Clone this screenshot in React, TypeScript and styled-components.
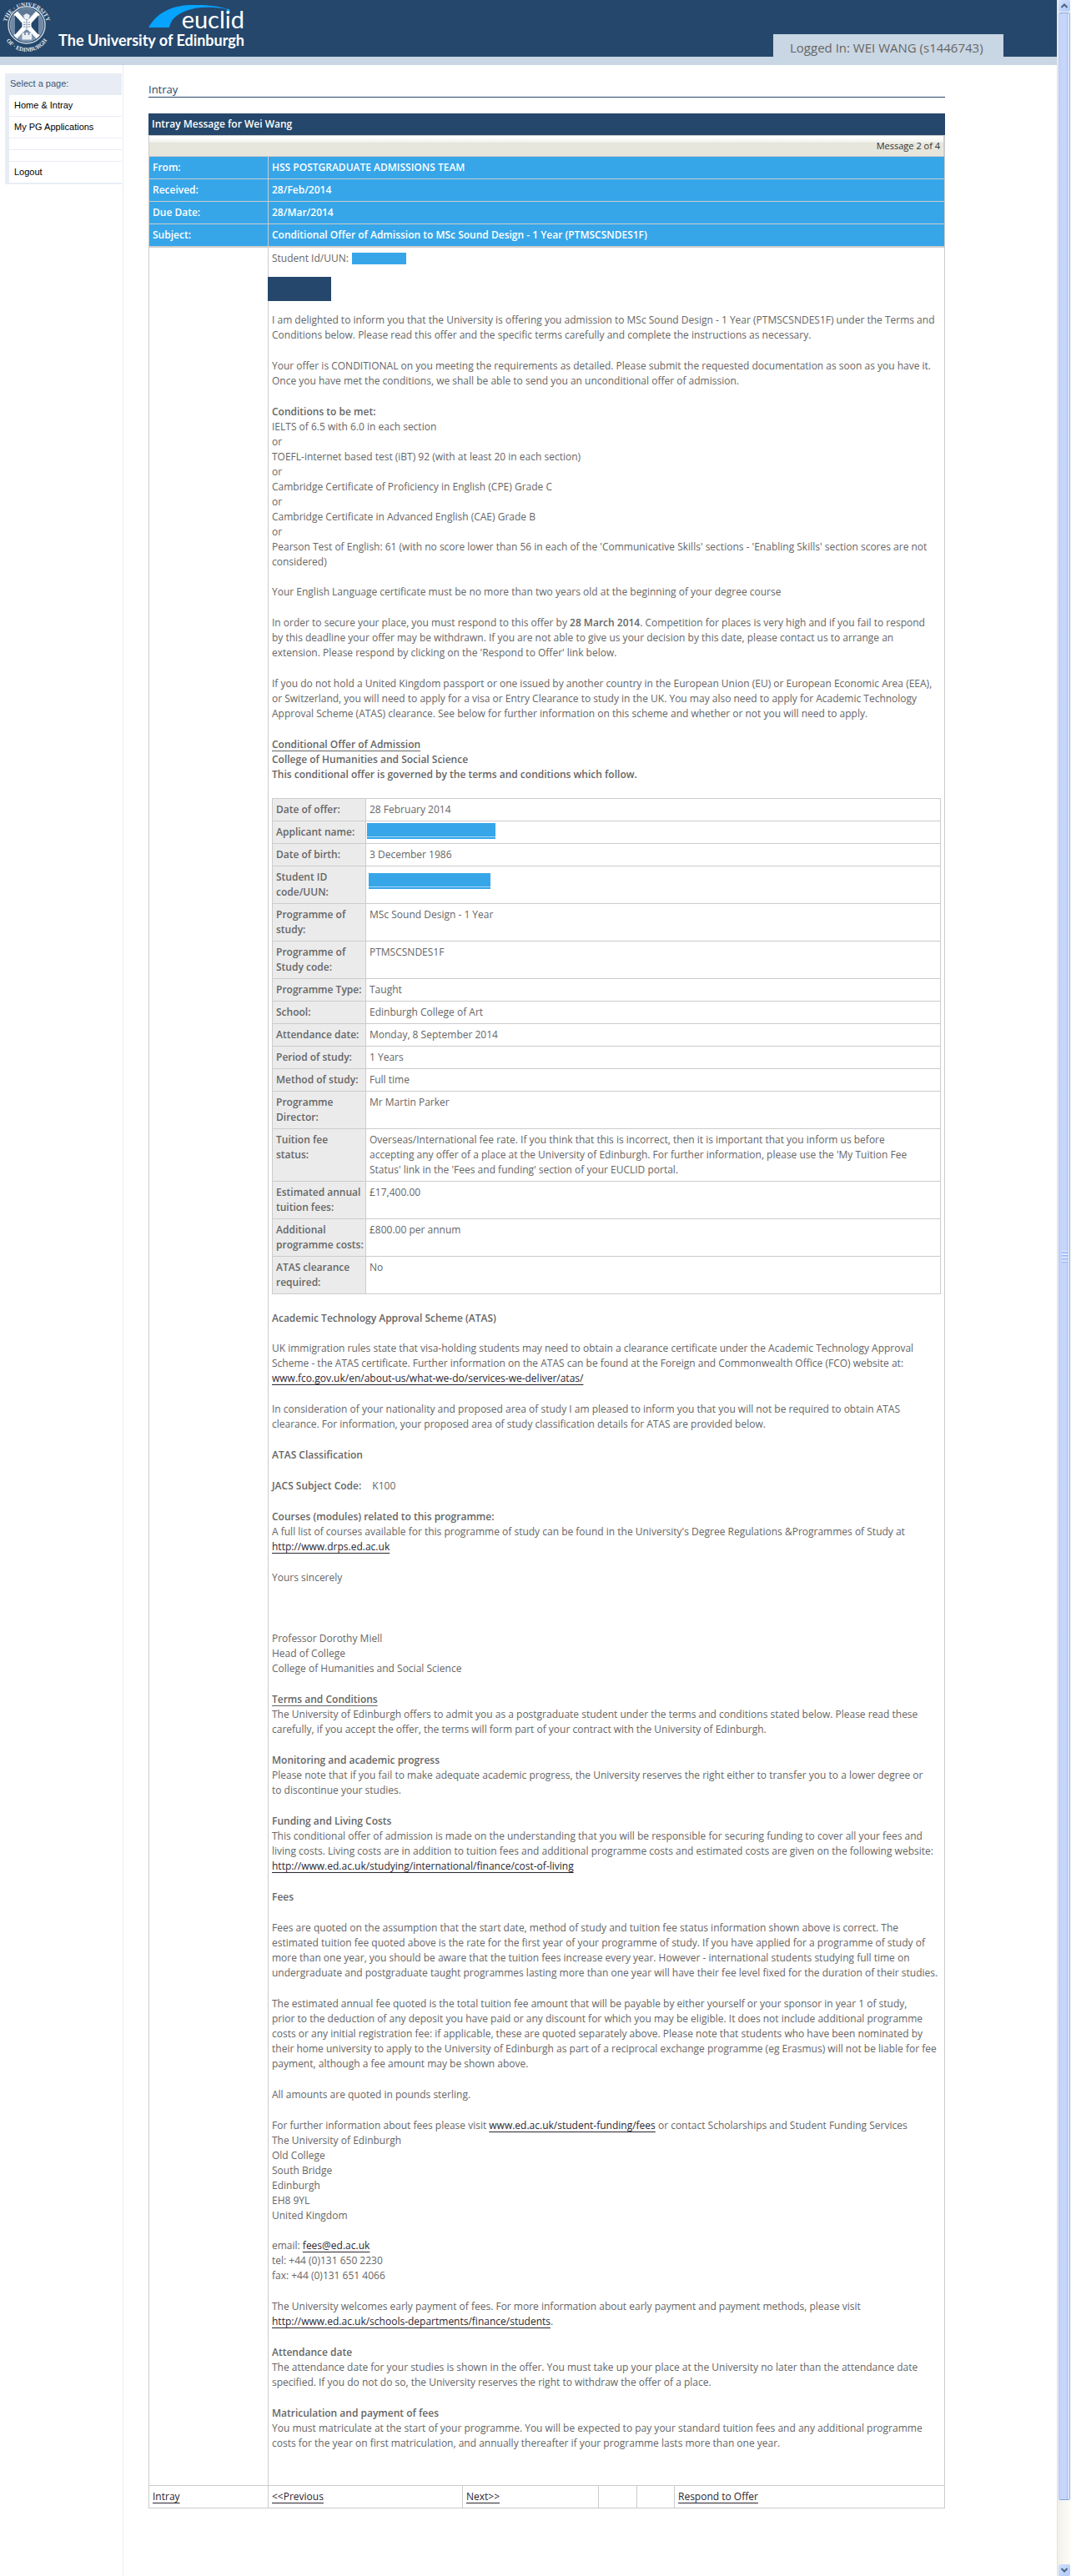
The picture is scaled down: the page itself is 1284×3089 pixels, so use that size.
import React from "react";
import styled, { createGlobalStyle } from "styled-components";

const navy = "#25476b";
const sky = "#36a6e9";
const pale = "#c9d6e3";
const line = "#cccccc";
const body = "#666666";
const bodyFont = '"Trebuchet MS", "Open Sans", sans-serif';
const menuFont = '"Liberation Sans", Arial, sans-serif';

const GlobalStyle = createGlobalStyle`
  * { box-sizing: border-box; }
  body { margin: 0; background: #fff; color: ${body}; font: 12px/18px ${bodyFont}; }
`;

const Shell = styled.div`
  display: flex;
  align-items: stretch;
`;
const Page = styled.div`
  flex: 1;
  min-width: 0;
  display: flex;
  flex-direction: column;
`;

const Header = styled.header`
  display: flex;
  justify-content: space-between;
  height: 78px;
  background: ${navy};
  border-bottom: 10px solid ${pale};
`;
const Brand = styled.div`
  display: flex;
`;
const Wordmarks = styled.div`
  display: flex;
  flex-direction: column;
  align-items: flex-end;
  width: 231px;
  color: #fff;
`;
const Euclid = styled.div`
  display: flex;
  align-items: flex-start;
  height: 37px;
`;
const EuclidName = styled.span`
  margin-left: -59px;
  padding-top: 9px;
  font: 400 29px/28px Lato, sans-serif;
`;
const University = styled.span`
  font: 700 18px/22px Lato, sans-serif;
  white-space: nowrap;
`;
const LoginTab = styled.div`
  align-self: flex-end;
  min-width: 276px;
  height: 27px;
  margin-right: 64px;
  padding: 4px 20px 0;
  background: ${pale};
  color: ${body};
  font-size: 15px;
  line-height: 24px;
`;

const Columns = styled.div`
  flex: 1;
  display: flex;
`;
const Side = styled.aside`
  flex: 0 0 148px;
  padding: 10px 1px 0 6px;
  border-right: 1px solid #e9edf3;
  font-family: ${menuFont};
  font-size: 11px;
`;
const Menu = styled.nav`
  background: #e8edf5;
  padding: 0 0 2px 5px;
`;
const MenuTitle = styled.div`
  height: 26px;
  padding-left: 1px;
  line-height: 25px;
  color: #3a5677;
`;
const MenuList = styled.ul`
  display: flex;
  flex-direction: column;
  gap: 1px;
  margin: 0;
  padding: 0;
  list-style: none;
`;
const MenuItem = styled.li<{ $blank?: boolean }>`
  height: ${(p) => (p.$blank ? 13 : 25)}px;
  padding-left: 6px;
  background: #fff;
  line-height: 25px;
`;
const MenuLink = styled.a`
  color: #000;
  text-decoration: none;
`;

const Main = styled.main`
  flex: 1;
  min-width: 0;
  padding: 20px 134px 81px 30px;
`;
const PageTitle = styled.h1`
  margin: 0 0 19px;
  border-bottom: 1px solid ${navy};
  color: ${navy};
  font-size: 13px;
  font-weight: 400;
  line-height: 18px;
`;
const MessageTitle = styled.h2`
  margin: 0;
  padding: 0 4px;
  background: ${navy};
  color: #fff;
  font-size: 12px;
  font-weight: 600;
  line-height: 26px;
`;
const Counter = styled.div`
  height: 25px;
  margin: 0;
  padding: 3px 4px 0;
  border: 1px solid ${line};
  border-width: 1px 2px 0 1px;
  background: linear-gradient(#fff 2px, #efefea 8px, #e6e6dd 8px);
  color: #333;
  font-size: 11px;
  text-align: right;
`;
const Message = styled.table`
  width: 100%;
  table-layout: fixed;
  border-spacing: 0;
  border-top: 1px solid ${line};
  border-left: 1px solid ${line};
`;
const LabelCol = styled.col`
  width: ${(p: { width?: number }) => p.width}px;
`;
const MetaRow = styled.tr`
  background: ${sky};
  color: #fff;
  font-weight: 600;
  &:last-child > * { border-bottom-width: 2px; }
`;
const metaCell = `
  padding: 4px;
  border-right: 1px solid ${line};
  border-bottom: 1px solid ${line};
  text-align: left;
  font-weight: 600;
`;
const MetaLabel = styled.th`${metaCell}`;
const MetaValue = styled.td`${metaCell}`;
const EmptyCell = styled.td`
  padding: 0;
  border-right: 1px solid ${line};
`;
const LetterCell = styled.td`
  padding: 4px 4px 41px;
  border-right: 1px solid ${line};
  vertical-align: top;
`;

const StudentLine = styled.p`
  display: flex;
  align-items: center;
  gap: 4px;
  margin: 0 0 13px;
`;
const Mask = styled.span<{ $w: number; $h: number }>`
  display: block;
  width: ${(p) => p.$w}px;
  height: ${(p) => p.$h}px;
  background: ${sky};
`;
const NameMask = styled.div`
  width: 76px;
  height: 29px;
  margin: 0 0 14px -5px;
  background: ${navy};
`;
const FieldMask = styled(Mask)<{ $inset: string }>`
  margin: ${(p) => p.$inset};
  border-bottom: 2px solid ${sky};
  background: linear-gradient(${sky} 16px, #a9d8f6 16px);
`;
const P = styled.p<{ $gap?: number }>`
  margin: 0 0 ${(p) => p.$gap ?? 19}px;
`;
const B = styled.strong`
  font-weight: 600;
`;
const U = styled(B)`
  text-decoration: underline;
  text-underline-offset: 3px;
`;
const Link = styled.a`
  color: #2b2630;
  text-decoration: underline;
  text-underline-offset: 3px;
`;
const Code = styled.span`
  margin-left: 10px;
`;

const Offer = styled.table`
  width: 100%;
  margin: 0 0 20px;
  table-layout: fixed;
  border-spacing: 0;
  border-top: 1px solid ${line};
  border-left: 1px solid ${line};
`;
const offerCell = `
  padding: 4px;
  border-right: 1px solid ${line};
  border-bottom: 1px solid ${line};
  vertical-align: top;
  text-align: left;
`;
const OfferLabel = styled.th`
  ${offerCell}
  padding-right: 0;
  background: #ebebeb;
  font-weight: 600;
  white-space: nowrap;
`;
const OfferValue = styled.td`${offerCell}`;

const Actions = styled.nav`
  display: grid;
  grid-template-columns: 143px 233px 163px 46px 45px 1fr;
  border: 1px solid ${line};
  border-right-width: 0;
`;
const Action = styled.div`
  height: 26px;
  padding: 4px;
  border-right: 1px solid ${line};
`;

const Scroll = styled.div`
  flex: 0 0 17px;
  display: flex;
  flex-direction: column;
  padding: 0 1px;
  border-left: 1px solid #e6e2da;
  background: linear-gradient(90deg, #f2f0e8, #fdfdfa);
`;
const ScrollButton = styled.button`
  height: 14px;
  padding: 0;
  border: 0;
  border-radius: 2px;
  background: linear-gradient(135deg, #d3dffd, #aecaf8);
  line-height: 0;
`;
const Thumb = styled.div`
  flex: 1;
  display: flex;
  flex-direction: column;
  align-items: center;
  justify-content: center;
  gap: 2px;
  margin: 1px 0 77px;
  border: 1px solid #86a5dc;
  border-left-color: #b5c9f5;
  border-radius: 2px;
  background: linear-gradient(90deg, #c3d3fb, #c8d6fb 60%, #b2c7f8 90%, #fff 90%);
`;
const Grip = styled.span`
  width: 7px;
  height: 2px;
  border-top: 1px solid #eef4fe;
  background: #8cb0f8;
`;

const Crest = () => (
  <svg width="62" height="62" viewBox="0 0 62 62" role="img" aria-label="University crest">
    <defs>
      <path id="ringTop" d="M7.500 32 A24.500 24.500 0 0 1 56.500 32" />
      <path id="ringBottom" d="M3 33 A29 29 0 0 0 61 33" />
    </defs>
    <g fill="#e3eaf1" fontFamily="Liberation Serif, serif" fontSize="7" fontWeight="700" textAnchor="middle">
      <text>
        <textPath href="#ringTop" startOffset="50%">THE · UNIVERSITY</textPath>
      </text>
      <text>
        <textPath href="#ringBottom" startOffset="50%">OF · EDINBURGH</textPath>
      </text>
    </g>
    <g transform="translate(.5 .5)">
      <circle cx="31.500" cy="29.500" r="22" fill="#25476b" stroke="#c9d5e1" strokeWidth="1.400" />
      <circle cx="31.500" cy="29.500" r="19.800" fill="#6f88a3" stroke="#93a7bc" strokeWidth="1" />
      <path d="M18 15 L45 44 M45 15 L18 44" stroke="#fff" strokeWidth="6" />
      <path d="M17.500 18 L28 29.500 L17.500 41 Z M45.500 18 L35 29.500 L45.500 41 Z" fill="#25476b" />
      <path d="M21 12.500 Q31.500 8 42 12.500 L31.500 24 Z" fill="#5d7894" />
      <path d="M31.500 15.500 l4 2.500 -2 5 h-4 l-2 -5 z" fill="#e9eef4" />
      <path d="M20 45.500 Q31.500 51 43 45.500 L36 38 H27 Z" fill="#7f96ae" />
      <path d="M26 39 h2.500 v2.500 h2 v-3 h2.500 v3 h2 v-2.500 h2.500 v8 h-11.500 z" fill="#e9eef4" />
      <path d="M26 24 q3 -1.500 5.500 0 q2.500 -1.500 5.500 0 v11 q-3 -1 -5.500 .5 q-2.500 -1.500 -5.500 -.5 z" fill="#fff" />
      <path d="M31.500 24 v11 M27.500 26.500 h2.500 M27.500 29 h2.500 M27.500 31.500 h2.500 M33 26.500 h2.500 M33 29 h2.500 M33 31.500 h2.500" stroke="#54708e" strokeWidth=".8" />
    </g>
  </svg>
);

const Swoosh = () => (
  <svg width="99" height="34" viewBox="0 0 99 34" aria-hidden="true">
    <path d="M0 33 C12 12 33 5 58 6 C75 6 88 8 98 12 C76 7 58 8 45 13 C32 18 27 24 25 33 Z" fill="#06a3ff" />
    <circle cx="95.500" cy="12.500" r="2" fill="#06a3ff" />
  </svg>
);

const Chevron = ({ up }: { up?: boolean }) => (
  <svg width="10" height="8" viewBox="0 0 10 8" aria-hidden="true">
    <path d={up ? "M1.500 6 L5 2.500 L8.500 6" : "M1.500 2 L5 5.500 L8.500 2"} fill="none" stroke="#4d6185" strokeWidth="2" />
  </svg>
);

const meta: [string, string][] = [
  ["From:", "HSS POSTGRADUATE ADMISSIONS TEAM"],
  ["Received:", "28/Feb/2014"],
  ["Due Date:", "28/Mar/2014"],
  ["Subject:", "Conditional Offer of Admission to MSc Sound Design - 1 Year (PTMSCSNDES1F)"],
];

/** Stacks strings and nodes one per line. */
const Lines = ({ of }: { of: React.ReactNode[] }) => (
  <>
    {of.map((item, i) => (
      <React.Fragment key={i}>
        {i > 0 && <br />}
        {item}
      </React.Fragment>
    ))}
  </>
);

const offer: [string[], React.ReactNode][] = [
  [["Date of offer:"], "28 February 2014"],
  [["Applicant name:"], <FieldMask $w={154} $h={19} $inset="-2px 0 1px -3px" />],
  [["Date of birth:"], "3 December 1986"],
  [["Student ID", "code/UUN:"], <FieldMask $w={146} $h={19} $inset="4px 0 0 -1px" />],
  [["Programme of", "study:"], "MSc Sound Design - 1 Year"],
  [["Programme of", "Study code:"], "PTMSCSNDES1F"],
  [["Programme Type:"], "Taught"],
  [["School:"], "Edinburgh College of Art"],
  [["Attendance date:"], "Monday, 8 September 2014"],
  [["Period of study:"], "1 Years"],
  [["Method of study:"], "Full time"],
  [["Programme", "Director:"], "Mr Martin Parker"],
  [
    ["Tuition fee", "status:"],
    <Lines
      of={[
        "Overseas/International fee rate. If you think that this is incorrect, then it is important that you inform us before",
        "accepting any offer of a place at the University of Edinburgh. For further information, please use the 'My Tuition Fee",
        "Status' link in the 'Fees and funding' section of your EUCLID portal.",
      ]}
    />,
  ],
  [["Estimated annual", "tuition fees:"], "£17,400.00"],
  [["Additional", "programme costs:"], "£800.00 per annum"],
  [["ATAS clearance", "required:"], "No"],
];

const Letter = () => (
  <>
    <StudentLine>
      Student Id/UUN: <Mask $w={65} $h={14} />
    </StudentLine>
    <NameMask />
    <P>
      <Lines
        of={[
          "I am delighted to inform you that the University is offering you admission to MSc Sound Design - 1 Year (PTMSCSNDES1F) under the Terms and",
          "Conditions below. Please read this offer and the specific terms carefully and complete the instructions as necessary.",
        ]}
      />
    </P>
    <P>
      <Lines
        of={[
          "Your offer is CONDITIONAL on you meeting the requirements as detailed. Please submit the requested documentation as soon as you have it.",
          "Once you have met the conditions, we shall be able to send you an unconditional offer of admission.",
        ]}
      />
    </P>
    <P $gap={18}>
      <Lines
        of={[
          <B>Conditions to be met:</B>,
          "IELTS of 6.5 with 6.0 in each section",
          "or",
          "TOEFL-internet based test (iBT) 92 (with at least 20 in each section)",
          "or",
          "Cambridge Certificate of Proficiency in English (CPE) Grade C",
          "or",
          "Cambridge Certificate in Advanced English (CAE) Grade B",
          "or",
          "Pearson Test of English: 61 (with no score lower than 56 in each of the 'Communicative Skills' sections - 'Enabling Skills' section scores are not",
          "considered)",
        ]}
      />
    </P>
    <P>Your English Language certificate must be no more than two years old at the beginning of your degree course</P>
    <P>
      <Lines
        of={[
          <>
            In order to secure your place, you must respond to this offer by <B>28 March 2014</B>. Competition for places is very high and if you fail to respond
          </>,
          "by this deadline your offer may be withdrawn. If you are not able to give us your decision by this date, please contact us to arrange an",
          "extension. Please respond by clicking on the 'Respond to Offer' link below.",
        ]}
      />
    </P>
    <P>
      <Lines
        of={[
          "If you do not hold a United Kingdom passport or one issued by another country in the European Union (EU) or European Economic Area (EEA),",
          "or Switzerland, you will need to apply for a visa or Entry Clearance to study in the UK. You may also need to apply for Academic Technology",
          "Approval Scheme (ATAS) clearance. See below for further information on this scheme and whether or not you will need to apply.",
        ]}
      />
    </P>
    <P>
      <Lines
        of={[
          <U>Conditional Offer of Admission</U>,
          <B>College of Humanities and Social Science</B>,
          <B>This conditional offer is governed by the terms and conditions which follow.</B>,
        ]}
      />
    </P>
    <Offer>
      <colgroup>
        <LabelCol width={112} />
        <col />
      </colgroup>
      <tbody>
        {offer.map(([label, value]) => (
          <tr key={label.join(" ")}>
            <OfferLabel scope="row">
              <Lines of={label} />
            </OfferLabel>
            <OfferValue>{value}</OfferValue>
          </tr>
        ))}
      </tbody>
    </Offer>
    <P $gap={18}>
      <B>Academic Technology Approval Scheme (ATAS)</B>
    </P>
    <P>
      <Lines
        of={[
          "UK immigration rules state that visa-holding students may need to obtain a clearance certificate under the Academic Technology Approval",
          "Scheme - the ATAS certificate. Further information on the ATAS can be found at the Foreign and Commonwealth Office (FCO) website at:",
          <Link href="#atas">www.fco.gov.uk/en/about-us/what-we-do/services-we-deliver/atas/</Link>,
        ]}
      />
    </P>
    <P>
      <Lines
        of={[
          "In consideration of your nationality and proposed area of study I am pleased to inform you that you will not be required to obtain ATAS",
          "clearance. For information, your proposed area of study classification details for ATAS are provided below.",
        ]}
      />
    </P>
    <P>
      <B>ATAS Classification</B>
    </P>
    <P>
      <B>JACS Subject Code:</B> <Code>K100</Code>
    </P>
    <P>
      <Lines
        of={[
          <B>Courses (modules) related to this programme:</B>,
          "A full list of courses available for this programme of study can be found in the University's Degree Regulations &Programmes of Study at",
          <Link href="#drps">http://www.drps.ed.ac.uk</Link>,
        ]}
      />
    </P>
    <P $gap={55}>Yours sincerely</P>
    <P>
      <Lines of={["Professor Dorothy Miell", "Head of College", "College of Humanities and Social Science"]} />
    </P>
    <P>
      <Lines
        of={[
          <U>Terms and Conditions</U>,
          "The University of Edinburgh offers to admit you as a postgraduate student under the terms and conditions stated below. Please read these",
          "carefully, if you accept the offer, the terms will form part of your contract with the University of Edinburgh.",
        ]}
      />
    </P>
    <P>
      <Lines
        of={[
          <B>Monitoring and academic progress</B>,
          "Please note that if you fail to make adequate academic progress, the University reserves the right either to transfer you to a lower degree or",
          "to discontinue your studies.",
        ]}
      />
    </P>
    <P>
      <Lines
        of={[
          <B>Funding and Living Costs</B>,
          "This conditional offer of admission is made on the understanding that you will be responsible for securing funding to cover all your fees and",
          "living costs. Living costs are in addition to tuition fees and additional programme costs and estimated costs are given on the following website:",
          <Link href="#living">http://www.ed.ac.uk/studying/international/finance/cost-of-living</Link>,
        ]}
      />
    </P>
    <P>
      <B>Fees</B>
    </P>
    <P>
      <Lines
        of={[
          "Fees are quoted on the assumption that the start date, method of study and tuition fee status information shown above is correct. The",
          "estimated tuition fee quoted above is the rate for the first year of your programme of study. If you have applied for a programme of study of",
          "more than one year, you should be aware that the tuition fees increase every year. However - international students studying full time on",
          "undergraduate and postgraduate taught programmes lasting more than one year will have their fee level fixed for the duration of their studies.",
        ]}
      />
    </P>
    <P>
      <Lines
        of={[
          "The estimated annual fee quoted is the total tuition fee amount that will be payable by either yourself or your sponsor in year 1 of study,",
          "prior to the deduction of any deposit you have paid or any discount for which you may be eligible. It does not include additional programme",
          "costs or any initial registration fee: if applicable, these are quoted separately above. Please note that students who have been nominated by",
          "their home university to apply to the University of Edinburgh as part of a reciprocal exchange programme (eg Erasmus) will not be liable for fee",
          "payment, although a fee amount may be shown above.",
        ]}
      />
    </P>
    <P>All amounts are quoted in pounds sterling.</P>
    <P $gap={18}>
      <Lines
        of={[
          <>
            For further information about fees please visit <Link href="#fees">www.ed.ac.uk/student-funding/fees</Link> or contact Scholarships and Student Funding Services
          </>,
          "The University of Edinburgh",
          "Old College",
          "South Bridge",
          "Edinburgh",
          "EH8 9YL",
          "United Kingdom",
        ]}
      />
    </P>
    <P>
      <Lines
        of={[
          <>
            email: <Link href="#email">fees@ed.ac.uk</Link>
          </>,
          "tel: +44 (0)131 650 2230",
          "fax: +44 (0)131 651 4066",
        ]}
      />
    </P>
    <P>
      <Lines
        of={[
          "The University welcomes early payment of fees. For more information about early payment and payment methods, please visit",
          <>
            <Link href="#students">http://www.ed.ac.uk/schools-departments/finance/students</Link>.
          </>,
        ]}
      />
    </P>
    <P>
      <Lines
        of={[
          <B>Attendance date</B>,
          "The attendance date for your studies is shown in the offer. You must take up your place at the University no later than the attendance date",
          "specified. If you do not do so, the University reserves the right to withdraw the offer of a place.",
        ]}
      />
    </P>
    <P $gap={0}>
      <Lines
        of={[
          <B>Matriculation and payment of fees</B>,
          "You must matriculate at the start of your programme. You will be expected to pay your standard tuition fees and any additional programme",
          "costs for the year on first matriculation, and annually thereafter if your programme lasts more than one year.",
        ]}
      />
    </P>
  </>
);

const actions = ["Intray", "<<Previous", "Next>>", "", "", "Respond to Offer"];
const menu = ["Home & Intray", "My PG Applications", "", "", "Logout"];

export default function App() {
  return (
    <>
      <GlobalStyle />
      <Shell>
        <Page>
          <Header>
            <Brand>
              <Crest />
              <Wordmarks>
                <Euclid>
                  <Swoosh />
                  <EuclidName>euclid</EuclidName>
                </Euclid>
                <University>The University of Edinburgh</University>
              </Wordmarks>
            </Brand>
            <LoginTab>Logged In: WEI WANG (s1446743)</LoginTab>
          </Header>
          <Columns>
            <Side>
              <Menu>
                <MenuTitle>Select a page:</MenuTitle>
                <MenuList>
                  {menu.map((item, i) => (
                    <MenuItem key={i} $blank={!item}>
                      {item && <MenuLink href="#menu">{item}</MenuLink>}
                    </MenuItem>
                  ))}
                </MenuList>
              </Menu>
            </Side>
            <Main>
              <PageTitle>Intray</PageTitle>
              <MessageTitle>Intray Message for Wei Wang</MessageTitle>
              <Counter>Message 2 of 4</Counter>
              <Message>
                <colgroup>
                  <LabelCol width={143} />
                  <col />
                </colgroup>
                <thead>
                  {meta.map(([label, value]) => (
                    <MetaRow key={label}>
                      <MetaLabel scope="row">{label}</MetaLabel>
                      <MetaValue>{value}</MetaValue>
                    </MetaRow>
                  ))}
                </thead>
                <tbody>
                  <tr>
                    <EmptyCell />
                    <LetterCell>
                      <Letter />
                    </LetterCell>
                  </tr>
                </tbody>
              </Message>
              <Actions>
                {actions.map((label, i) => (
                  <Action key={i}>{label && <Link href="#action">{label}</Link>}</Action>
                ))}
              </Actions>
            </Main>
          </Columns>
        </Page>
        <Scroll>
          <ScrollButton type="button" aria-label="Scroll up">
            <Chevron up />
          </ScrollButton>
          <Thumb>
            <Grip />
            <Grip />
            <Grip />
            <Grip />
          </Thumb>
          <ScrollButton type="button" aria-label="Scroll down">
            <Chevron />
          </ScrollButton>
        </Scroll>
      </Shell>
    </>
  );
}
